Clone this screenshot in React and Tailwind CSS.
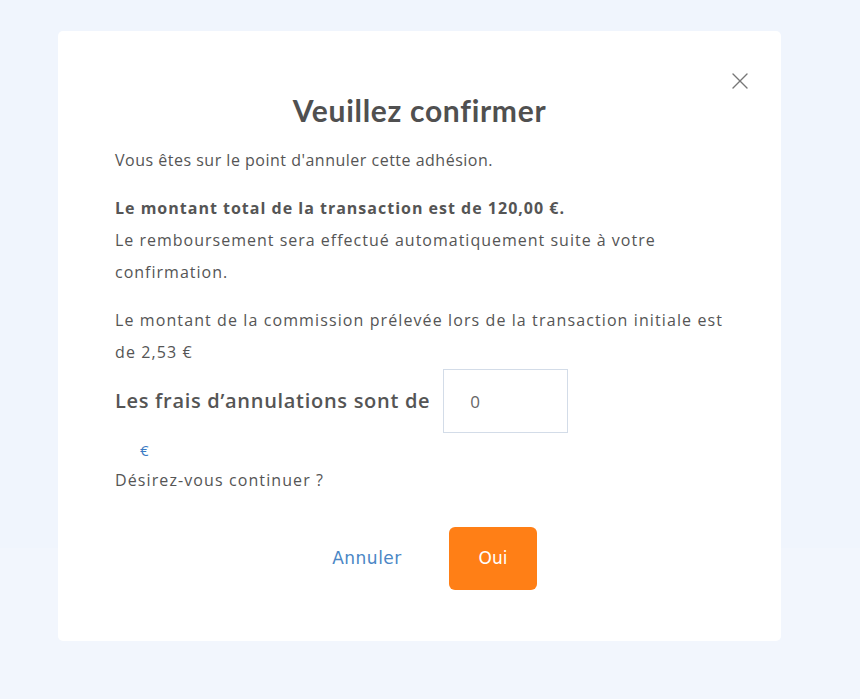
import { X } from "lucide-react";

export default function App() {
  return (
    <div className="min-h-screen bg-[#f0f5fd] pt-[31px] pl-[58px] relative" style={{ fontFamily: "'Open Sans', sans-serif" }}>
      <div className="absolute left-0 right-0 top-[548px] bottom-0 bg-[#f2f6fd]" />
      <div className="relative w-[723px] bg-white rounded-[5px] pt-[61px] pb-[51px] px-[57px] text-[#555]">
        <button className="absolute top-[36px] right-[27px] text-[#777]">
          <X size={28} strokeWidth={1.2} />
        </button>

        <h2 className="text-center text-[30px] leading-[36px] font-bold tracking-[0.7px] text-[#505050]" style={{ fontFamily: "Lato, sans-serif" }}>
          Veuillez confirmer
        </h2>

        <p className="mt-[17px] text-[16px] leading-[31px] tracking-[0.5px]">Vous êtes sur le point d'annuler cette adhésion.</p>

        <div className="mt-[16px] text-[16px] leading-[32px]">
          <p className="font-bold tracking-[1px]">Le montant total de la transaction est de 120,00 €.</p>
          <p className="tracking-[1px]">Le remboursement sera effectué automatiquement suite à votre confirmation.</p>
        </div>

        <p className="mt-[16px] text-[16px] leading-[32px] tracking-[1.1px]">
          Le montant de la commission prélevée lors de la transaction initiale est de 2,53 €
        </p>

        <div className="mt-px flex items-center gap-[13px]">
          <span className="text-[20px] font-semibold tracking-[0.7px] text-[#555]">Les frais d’annulations sont de</span>
          <input
            type="text"
            defaultValue="0"
            className="w-[125px] h-[64px] border border-[#d3dce8] px-[26px] text-[17px] text-[#666] outline-none"
          />
        </div>

        <p className="mt-[5px] ml-[25px] text-[15px] leading-[24px] text-[#3b7bc4]">€</p>
        <p className="mt-[6px] text-[16px] leading-[24px] tracking-[1.1px]">Désirez-vous continuer ?</p>

        <div className="mt-[35px] flex justify-center gap-[38px] pl-[21px]">
          <button className="w-[88px] h-[63px] text-[17px] tracking-[0.5px] text-[#4a86c5]" style={{ fontFamily: "'DejaVu Sans', sans-serif" }}>
            Annuler
          </button>
          <button className="w-[88px] h-[63px] rounded-[6px] bg-[#ff7f16] text-white text-[17px]" style={{ fontFamily: "'DejaVu Sans', sans-serif" }}>
            Oui
          </button>
        </div>
      </div>
    </div>
  );
}
